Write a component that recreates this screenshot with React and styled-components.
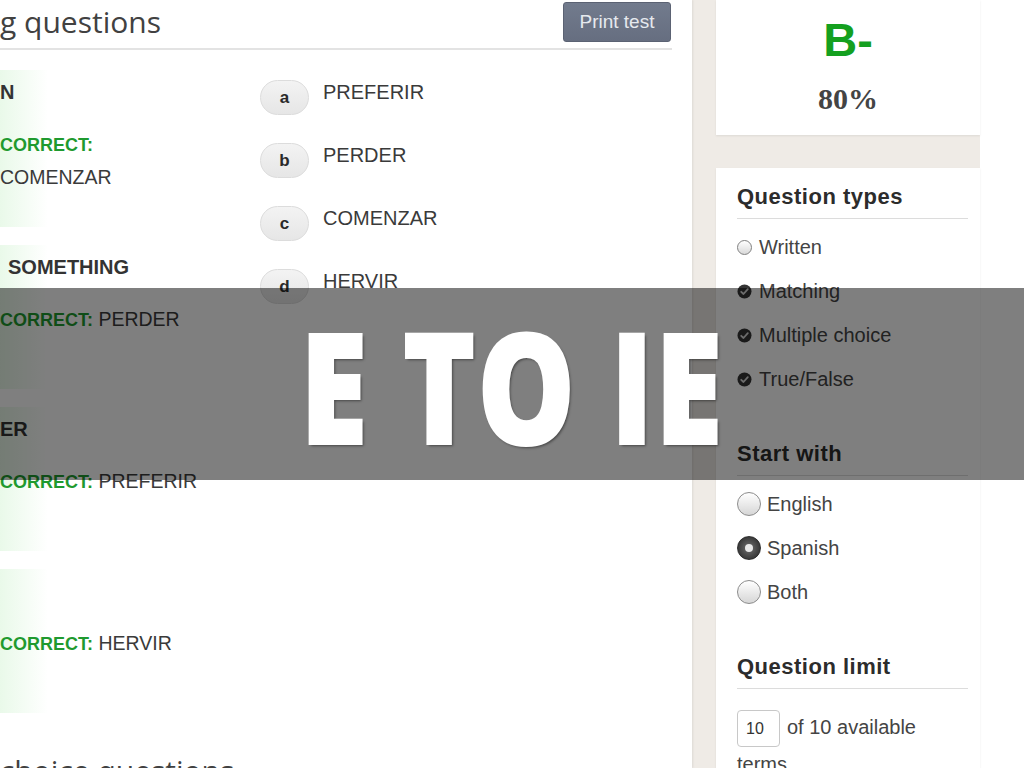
import React from 'react';
import styled, { createGlobalStyle } from 'styled-components';

const GlobalStyle = createGlobalStyle`
  html, body {
    margin: 0;
    padding: 0;
    background: #ffffff;
  }
  body {
    font-family: "Liberation Sans", Arial, sans-serif;
    color: #3a3a3a;
  }
`;

const terms = [
  { term: 'N', answer: 'COMENZAR', wrap: true, height: 175, x: 0 },
  { term: 'SOMETHING', answer: 'PERDER', height: 162, x: 8 },
  { term: 'ER', answer: 'PREFERIR', height: 162, x: 0 },
  { term: '', answer: 'HERVIR', height: 162, x: 0 },
];

const choices = [
  { letter: 'a', word: 'PREFERIR' },
  { letter: 'b', word: 'PERDER' },
  { letter: 'c', word: 'COMENZAR' },
  { letter: 'd', word: 'HERVIR' },
];

const Screen = styled.div`
  position: relative;
  width: 1024px;
  height: 768px;
  overflow: hidden;
  display: flex;
  background: #ffffff;
`;

const Main = styled.div`
  width: 692px;
  flex-shrink: 0;
  background: #ffffff;
  box-shadow: 1px 0 2px rgba(0, 0, 0, 0.08);
  z-index: 1;
`;

const Header = styled.div`
  width: 672px;
  height: 44px;
  padding-bottom: 4px;
  border-bottom: 2px solid #e3e3e3;
  display: flex;
  align-items: center;
  justify-content: space-between;
`;

const Title = styled.h2`
  margin: 0;
  font-family: "Open Sans", "Liberation Sans", sans-serif;
  font-weight: 400;
  font-size: 30px;
  line-height: 36px;
  color: #414141;
`;

const PrintButton = styled.button`
  width: 108px;
  height: 40px;
  margin-right: 1px;
  border: 1px solid #5b6273;
  border-radius: 3px;
  background: linear-gradient(#727b8d, #666e80);
  color: #e6e9ee;
  font-family: "Liberation Sans", Arial, sans-serif;
  font-size: 19px;
`;

const Matching = styled.div`
  display: flex;
  padding-top: 30px;
`;

const TermColumn = styled.div`
  width: 260px;
  display: flex;
  flex-direction: column;
`;

const TermItem = styled.div`
  height: ${({ h }) => h}px;
  padding-left: ${({ x }) => x}px;
  position: relative;
  &::before {
    content: '';
    position: absolute;
    left: 0;
    top: -10px;
    bottom: 28px;
    width: 48px;
    background: linear-gradient(90deg, rgba(224, 247, 224, 0.7), rgba(255, 255, 255, 0));
  }
`;

const Term = styled.div`
  position: relative;
  height: 24px;
  line-height: 24px;
  font-size: 20px;
  font-weight: 700;
  color: #333;
`;

const Answer = styled.div`
  position: relative;
  margin-top: 24px;
  margin-left: ${({ x }) => -x}px;
  line-height: 32px;
  font-size: 19.5px;
  color: #3a3a3a;
  white-space: nowrap;
`;

const Correct = styled.span`
  color: #1f9a2f;
  font-size: 18px;
  font-weight: 700;
`;

const ChoiceColumn = styled.div`
  display: flex;
  flex-direction: column;
`;

const ChoiceRow = styled.div`
  height: 63px;
  display: flex;
  align-items: flex-start;
  gap: 14px;
`;

const Pill = styled.div`
  width: 47px;
  height: 33px;
  border: 1px solid #dcdcdc;
  border-radius: 18px;
  background: linear-gradient(#f3f3f3, #e6e6e6);
  display: flex;
  align-items: center;
  justify-content: center;
  font-size: 17px;
  font-weight: 700;
  color: #2a2a2a;
`;

const ChoiceText = styled.div`
  line-height: 24px;
  font-size: 20px;
  color: #3a3a3a;
`;

const NextTitle = styled(Title)`
  margin-top: 12px;
`;

const Strip = styled.div`
  width: 288px;
  flex-shrink: 0;
  box-sizing: border-box;
  padding-left: 24px;
  background: #efebe6;
  display: flex;
  flex-direction: column;
  gap: 33px;
`;

const Card = styled.div`
  flex-shrink: 0;
  background: #ffffff;
  box-shadow: 0 1px 2px rgba(0, 0, 0, 0.08);
`;

const GradeCard = styled(Card)`
  height: 120px;
  padding-top: 15px;
  display: flex;
  flex-direction: column;
  align-items: center;
`;

const Grade = styled.div`
  height: 50px;
  line-height: 50px;
  font-size: 47px;
  font-weight: 700;
  color: #14a01f;
`;

const Percent = styled.div`
  margin-top: 17px;
  line-height: 34px;
  font-family: "Liberation Serif", "Times New Roman", serif;
  font-size: 30px;
  font-weight: 700;
  color: #444;
`;

const OptionsCard = styled(Card)`
  flex: 1 0 auto;
  padding: 15px 0 0 21px;
`;

const SectionTitle = styled.h3`
  width: 231px;
  margin: ${({ first }) => (first ? 0 : 49)}px 0 0;
  height: 28px;
  padding-bottom: 7px;
  border-bottom: 1px solid #dcdcdc;
  line-height: 28px;
  font-size: 22px;
  letter-spacing: 0.5px;
  font-weight: 700;
  color: #2c2c2c;
`;

const OptionList = styled.div`
  margin-top: 16px;
  display: flex;
  flex-direction: column;
  gap: 20px;
`;

const Option = styled.div`
  height: 24px;
  display: flex;
  align-items: center;
  gap: ${({ big }) => (big ? 6 : 7)}px;
  font-size: 20px;
  color: #444;
`;

const SmallCircle = styled.span`
  width: 13px;
  height: 13px;
  border-radius: 50%;
  border: 1px solid #808080;
  background: linear-gradient(#ffffff, #d9d9d9);
`;

const Radio = styled.span`
  box-sizing: border-box;
  width: 24px;
  height: 24px;
  border-radius: 50%;
  display: flex;
  align-items: center;
  justify-content: center;
  border: 1px solid ${({ on }) => (on ? '#2e2e2e' : '#8c8c8c')};
  background: ${({ on }) =>
    on
      ? 'radial-gradient(circle, #707070 0%, #3a3a3a 70%, #2a2a2a 100%)'
      : 'linear-gradient(#ffffff, #d6d6d6)'};
  &::after {
    content: '';
    display: ${({ on }) => (on ? 'block' : 'none')};
    width: 8px;
    height: 8px;
    border-radius: 50%;
    background: #e8e8e8;
  }
`;

const LimitText = styled.p`
  margin: 21px 0 0;
  width: 200px;
  line-height: 34px;
  font-size: 20px;
  color: #444;
`;

const LimitInput = styled.span`
  display: inline-block;
  box-sizing: border-box;
  width: 43px;
  height: 37px;
  margin-right: 7px;
  padding: 0 0 0 8px;
  border: 1px solid #c8c8c8;
  border-radius: 4px;
  vertical-align: middle;
  line-height: 35px;
  font-size: 16px;
  color: #333;
`;

const Band = styled.div`
  position: absolute;
  left: 0;
  right: 0;
  top: 288px;
  height: 192px;
  background: rgba(0, 0, 0, 0.5);
  display: flex;
  align-items: center;
  justify-content: center;
  z-index: 5;
`;

const BandTitle = styled.h1`
  margin: 0;
  font-family: "Open Sans", "Liberation Sans", sans-serif;
  font-weight: 800;
  font-size: 154px;
  line-height: 1;
  letter-spacing: 2px;
  color: #ffffff;
  -webkit-text-stroke: 2px #ffffff;
  transform: scaleX(0.8);
  text-shadow: 2px 2px 3px rgba(0, 0, 0, 0.45);
  white-space: nowrap;
`;

function CheckDot() {
  return (
    <svg width="15" height="15" viewBox="0 0 15 15">
      <circle cx="7.5" cy="7.5" r="7" fill="#353535" />
      <path d="M4.2 7.8 L6.5 10 L10.8 5.2" stroke="#d8d8d8" strokeWidth="1.8" fill="none" strokeLinecap="round" strokeLinejoin="round" />
    </svg>
  );
}

export default function App() {
  return (
    <Screen>
      <GlobalStyle />
      <Main>
        <Header>
          <Title>g questions</Title>
          <PrintButton>Print test</PrintButton>
        </Header>
        <Matching>
          <TermColumn>
            {terms.map((t, i) => (
              <TermItem key={i} h={t.height} x={t.x}>
                <Term>{t.term}</Term>
                <Answer x={t.x}>
                  <Correct>CORRECT:</Correct>
                  {t.wrap ? <br /> : ' '}
                  {t.answer}
                </Answer>
              </TermItem>
            ))}
          </TermColumn>
          <ChoiceColumn>
            {choices.map((c) => (
              <ChoiceRow key={c.letter}>
                <Pill>{c.letter}</Pill>
                <ChoiceText>{c.word}</ChoiceText>
              </ChoiceRow>
            ))}
          </ChoiceColumn>
        </Matching>
        <NextTitle>choice questions</NextTitle>
      </Main>
      <Strip>
        <GradeCard>
          <Grade>B-</Grade>
          <Percent>80%</Percent>
        </GradeCard>
        <OptionsCard>
          <SectionTitle first>Question types</SectionTitle>
          <OptionList>
            <Option>
              <SmallCircle />
              Written
            </Option>
            <Option>
              <CheckDot />
              Matching
            </Option>
            <Option>
              <CheckDot />
              Multiple choice
            </Option>
            <Option>
              <CheckDot />
              True/False
            </Option>
          </OptionList>
          <SectionTitle>Start with</SectionTitle>
          <OptionList>
            <Option big>
              <Radio />
              English
            </Option>
            <Option big>
              <Radio on />
              Spanish
            </Option>
            <Option big>
              <Radio />
              Both
            </Option>
          </OptionList>
          <SectionTitle>Question limit</SectionTitle>
          <LimitText>
            <LimitInput>10</LimitInput>
            of 10 available terms
          </LimitText>
        </OptionsCard>
      </Strip>
      <Band>
        <BandTitle>E TO IE</BandTitle>
      </Band>
    </Screen>
  );
}
